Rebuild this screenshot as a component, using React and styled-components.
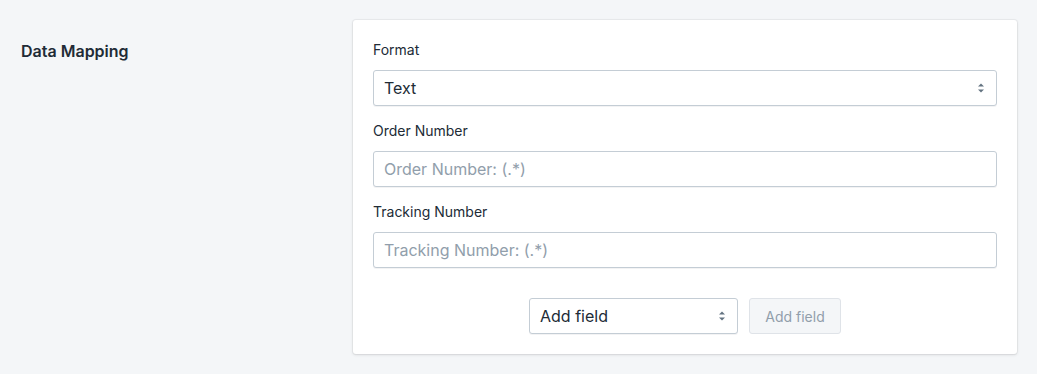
import styled, { createGlobalStyle } from "styled-components";

const GlobalStyle = createGlobalStyle`
  html, body {
    margin: 0;
    padding: 0;
    background: #f4f6f8;
  }
  body {
    font-family: Inter, "Noto Sans", sans-serif;
    color: #212b36;
    -webkit-font-smoothing: antialiased;
  }
`;

const Page = styled.div`
  display: flex;
  align-items: flex-start;
  padding: 20px;
  min-height: 334px;
`;

const Annotation = styled.div`
  width: 333px;
  flex-shrink: 0;
  padding: 19px 0 0 1px;
  box-sizing: border-box;
`;

const Heading = styled.h2`
  margin: 0;
  font-size: 16px;
  line-height: 24px;
  font-weight: 600;
  color: #212b36;
`;

const Card = styled.div`
  flex: 1;
  background: #fff;
  border-radius: 3px;
  box-shadow: 0 0 0 1px rgba(63, 63, 68, 0.05),
    0 1px 3px 0 rgba(63, 63, 68, 0.15);
  padding: 20px;
  display: flex;
  flex-direction: column;
`;

const Field = styled.div`
  display: flex;
  flex-direction: column;
  margin-bottom: 15px;
`;

const Label = styled.label`
  font-size: 14px;
  line-height: 20px;
  margin-bottom: 10px;
  color: #212b36;
`;

const Control = styled.div`
  position: relative;
  height: 36px;
  box-sizing: border-box;
  border: 1px solid #c4cdd5;
  border-radius: 3px;
  background: #fff;
  box-shadow: 0 1px 0 0 rgba(22, 29, 37, 0.05);
  display: flex;
  align-items: center;
  padding: 0 11px 0 10px;
  width: ${(p) => p.$width || "auto"};
`;

const Value = styled.span`
  flex: 1;
  font-size: 16px;
  color: ${(p) => (p.$placeholder ? "#919eab" : "#212b36")};
`;

const Input = styled.input`
  flex: 1;
  border: none;
  outline: none;
  padding: 0;
  background: transparent;
  font-family: inherit;
  font-size: 16px;
  color: #212b36;
  &::placeholder {
    color: #919eab;
  }
`;

const ActionRow = styled.div`
  display: flex;
  justify-content: center;
  gap: 11px;
  margin-top: 15px;
`;

const DisabledButton = styled.button`
  height: 36px;
  width: 92px;
  box-sizing: border-box;
  border: 1px solid #dfe3e8;
  border-radius: 3px;
  background: #f4f6f8;
  color: #919eab;
  font-family: inherit;
  font-size: 14px;
  cursor: default;
`;

function Arrows() {
  return (
    <svg width="8" height="12" viewBox="0 0 8 12" style={{ flexShrink: 0 }}>
      <path d="M1 4.5 L4 1.5 L7 4.5 Z" fill="#637381" />
      <path d="M1 7.5 L4 10.5 L7 7.5 Z" fill="#637381" />
    </svg>
  );
}

function Select({ value, width }) {
  return (
    <Control $width={width}>
      <Value>{value}</Value>
      <Arrows />
    </Control>
  );
}

function TextField({ label, placeholder }) {
  return (
    <Field>
      <Label>{label}</Label>
      <Control>
        <Input placeholder={placeholder} />
      </Control>
    </Field>
  );
}

export default function App() {
  return (
    <>
      <GlobalStyle />
      <Page>
        <Annotation>
          <Heading>Data Mapping</Heading>
        </Annotation>
        <Card>
          <Field>
            <Label>Format</Label>
            <Select value="Text" />
          </Field>
          <TextField label="Order Number" placeholder="Order Number: (.*)" />
          <TextField label="Tracking Number" placeholder="Tracking Number: (.*)" />
          <ActionRow>
            <Select value="Add field" width="209px" />
            <DisabledButton disabled>Add field</DisabledButton>
          </ActionRow>
        </Card>
      </Page>
    </>
  );
}
